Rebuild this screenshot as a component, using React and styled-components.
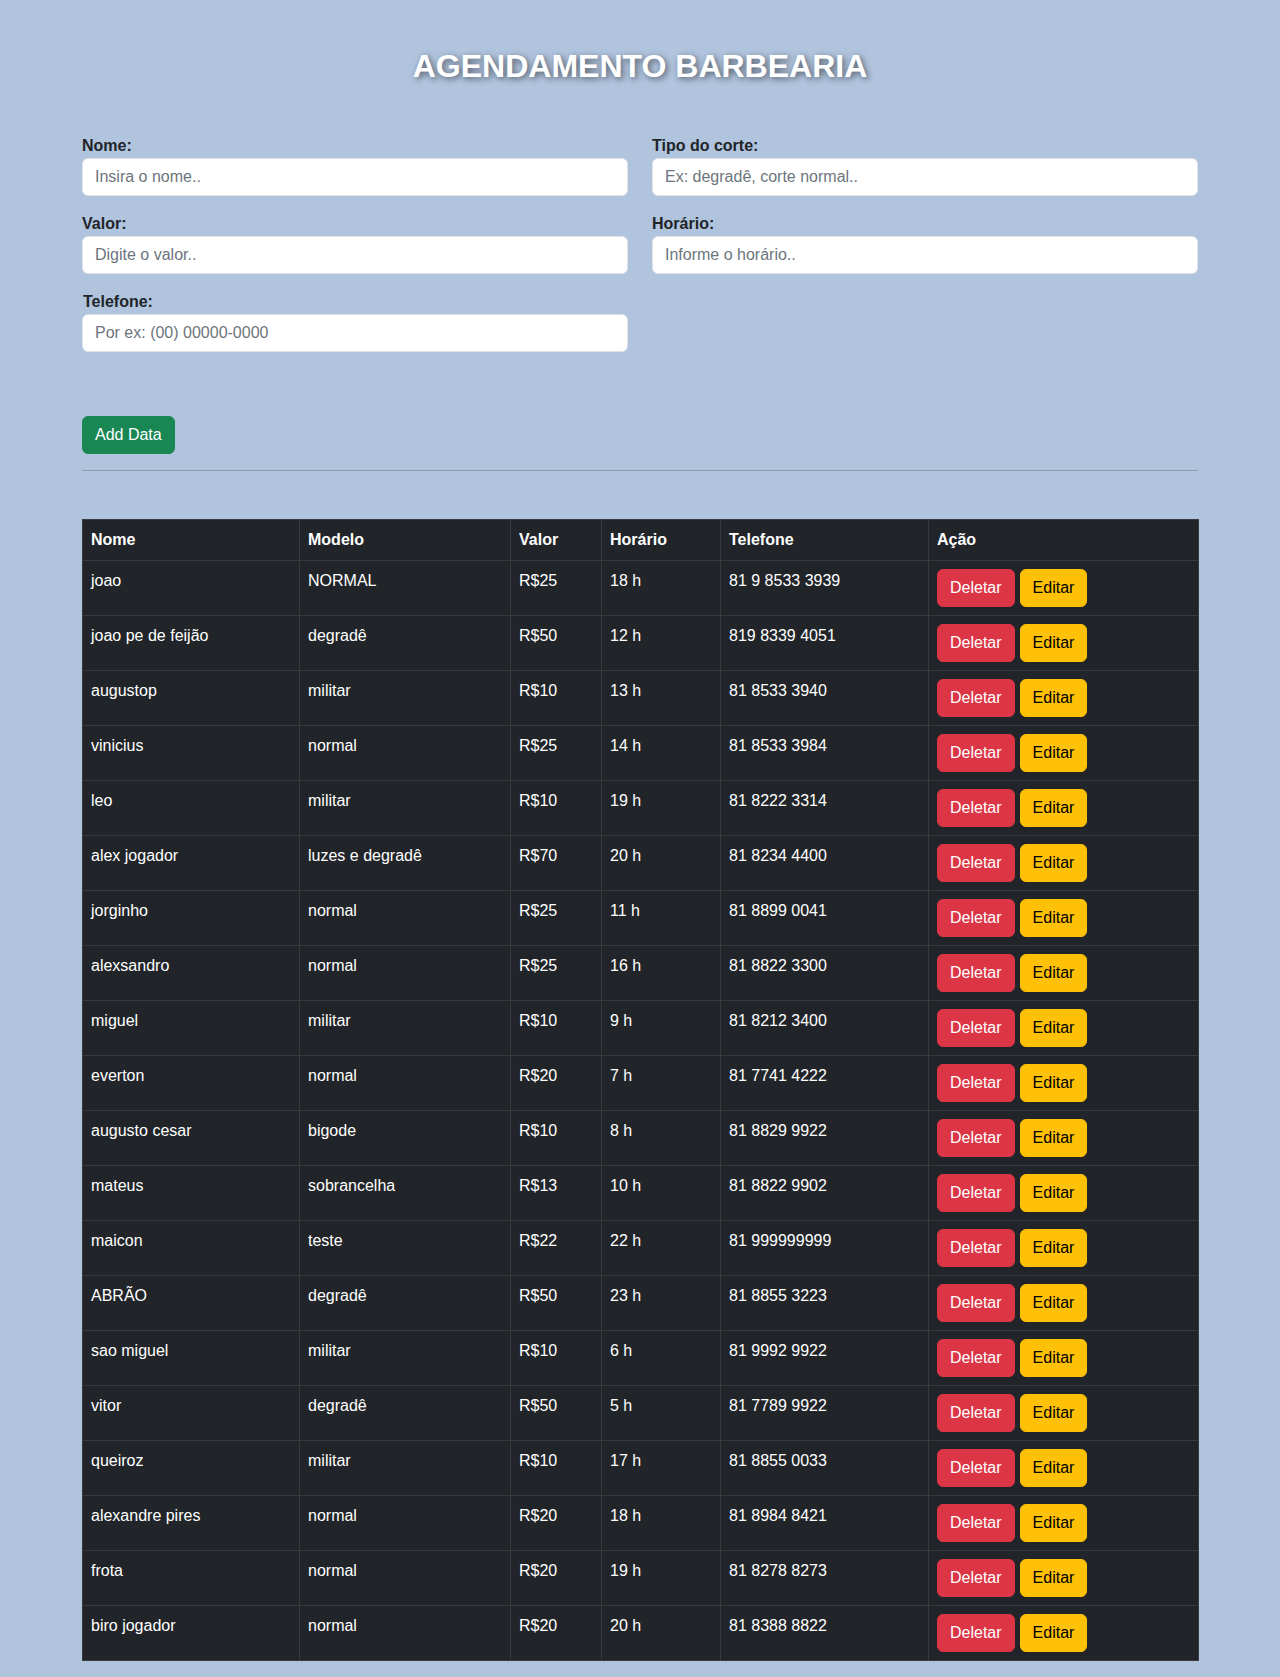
import React from "react";
import styled, { createGlobalStyle } from "styled-components";

const GlobalStyle = createGlobalStyle`
  body {
    margin: 0;
    background-color: #b0c4de;
    font-family: "Liberation Sans", Arial, sans-serif;
    font-size: 16px;
    line-height: 1.5;
    color: #212529;
  }
  * {
    box-sizing: border-box;
  }
`;

const Page = styled.div`
  width: 1116px;
  margin: 0 auto;
  padding: 47px 0 16px;
`;

const Title = styled.h1`
  margin: 0;
  text-align: center;
  font-size: 32px;
  line-height: 38px;
  font-weight: 700;
  color: #fff;
  text-shadow: 2px 2px 6px rgba(0, 0, 0, 0.55);
`;

const Form = styled.form`
  margin-top: 49px;
  display: grid;
  grid-template-columns: 1fr 1fr;
  column-gap: 24px;
  row-gap: 16px;
`;

const Field = styled.div`
  display: flex;
  flex-direction: column;
`;

const Label = styled.label`
  font-weight: 700;
  line-height: 24px;
  color: #212529;
  padding-left: ${(p) => (p.$nudge ? "1px" : "0")};
`;

const Input = styled.input`
  height: 38px;
  padding: 6px 12px;
  font-family: inherit;
  font-size: 16px;
  color: #212529;
  background: #fff;
  border: 1px solid #dee2e6;
  border-radius: 6px;
  outline: none;
  &::placeholder {
    color: #6c757d;
  }
`;

const Actions = styled.div`
  margin-top: 64px;
`;

const Button = styled.button`
  height: 38px;
  padding: 6px 12px;
  font-family: inherit;
  font-size: 16px;
  line-height: 24px;
  border: 1px solid ${(p) => p.$bg};
  border-radius: 6px;
  background: ${(p) => p.$bg};
  color: ${(p) => p.$fg};
  cursor: pointer;
`;

const Rule = styled.hr`
  margin: 16px 0 0;
  border: 0;
  border-top: 1px solid #8c9bb0;
`;

const Table = styled.table`
  margin-top: 48px;
  width: 100%;
  table-layout: fixed;
  border-collapse: collapse;
  background: #212529;
  color: #fff;
  border: 1px solid #373b3e;
`;

const Th = styled.th`
  width: ${(p) => p.$w}px;
  padding: 8px;
  text-align: left;
  font-weight: 700;
  line-height: 24px;
  vertical-align: top;
  border: 1px solid #373b3e;
`;

const Td = styled.td`
  padding: 8px;
  line-height: 24px;
  vertical-align: top;
  border: 1px solid #373b3e;
`;

const ButtonGroup = styled.div`
  display: flex;
  gap: 5px;
`;

const columns = [
  ["Nome", 217],
  ["Modelo", 211],
  ["Valor", 91],
  ["Horário", 119],
  ["Telefone", 208],
  ["Ação", 270],
];

const rows = [
  ["joao", "NORMAL", "R$25", "18 h", "81 9 8533 3939"],
  ["joao pe de feijão", "degradê", "R$50", "12 h", "819 8339 4051"],
  ["augustop", "militar", "R$10", "13 h", "81 8533 3940"],
  ["vinicius", "normal", "R$25", "14 h", "81 8533 3984"],
  ["leo", "militar", "R$10", "19 h", "81 8222 3314"],
  ["alex jogador", "luzes e degradê", "R$70", "20 h", "81 8234 4400"],
  ["jorginho", "normal", "R$25", "11 h", "81 8899 0041"],
  ["alexsandro", "normal", "R$25", "16 h", "81 8822 3300"],
  ["miguel", "militar", "R$10", "9 h", "81 8212 3400"],
  ["everton", "normal", "R$20", "7 h", "81 7741 4222"],
  ["augusto cesar", "bigode", "R$10", "8 h", "81 8829 9922"],
  ["mateus", "sobrancelha", "R$13", "10 h", "81 8822 9902"],
  ["maicon", "teste", "R$22", "22 h", "81 999999999"],
  ["ABRÃO", "degradê", "R$50", "23 h", "81 8855 3223"],
  ["sao miguel", "militar", "R$10", "6 h", "81 9992 9922"],
  ["vitor", "degradê", "R$50", "5 h", "81 7789 9922"],
  ["queiroz", "militar", "R$10", "17 h", "81 8855 0033"],
  ["alexandre pires", "normal", "R$20", "18 h", "81 8984 8421"],
  ["frota", "normal", "R$20", "19 h", "81 8278 8273"],
  ["biro jogador", "normal", "R$20", "20 h", "81 8388 8822"],
];

export default function App() {
  return (
    <>
      <GlobalStyle />
      <Page>
        <Title>AGENDAMENTO BARBEARIA</Title>

        <Form onSubmit={(e) => e.preventDefault()}>
          <Field>
            <Label>Nome:</Label>
            <Input placeholder="Insira o nome.." />
          </Field>
          <Field>
            <Label>Tipo do corte:</Label>
            <Input placeholder="Ex: degradê, corte normal.." />
          </Field>
          <Field>
            <Label>Valor:</Label>
            <Input placeholder="Digite o valor.." />
          </Field>
          <Field>
            <Label>Horário:</Label>
            <Input placeholder="Informe o horário.." />
          </Field>
          <Field>
            <Label $nudge>Telefone:</Label>
            <Input placeholder="Por ex: (00) 00000-0000" />
          </Field>
        </Form>

        <Actions>
          <Button $bg="#198754" $fg="#fff">Add Data</Button>
        </Actions>
        <Rule />

        <Table>
          <thead>
            <tr>
              {columns.map(([name, w]) => (
                <Th key={name} $w={w}>{name}</Th>
              ))}
            </tr>
          </thead>
          <tbody>
            {rows.map((r, i) => (
              <tr key={i}>
                {r.map((c, j) => (
                  <Td key={j}>{c}</Td>
                ))}
                <Td>
                  <ButtonGroup>
                    <Button $bg="#dc3545" $fg="#fff">Deletar</Button>
                    <Button $bg="#ffc107" $fg="#000">Editar</Button>
                  </ButtonGroup>
                </Td>
              </tr>
            ))}
          </tbody>
        </Table>
      </Page>
    </>
  );
}
